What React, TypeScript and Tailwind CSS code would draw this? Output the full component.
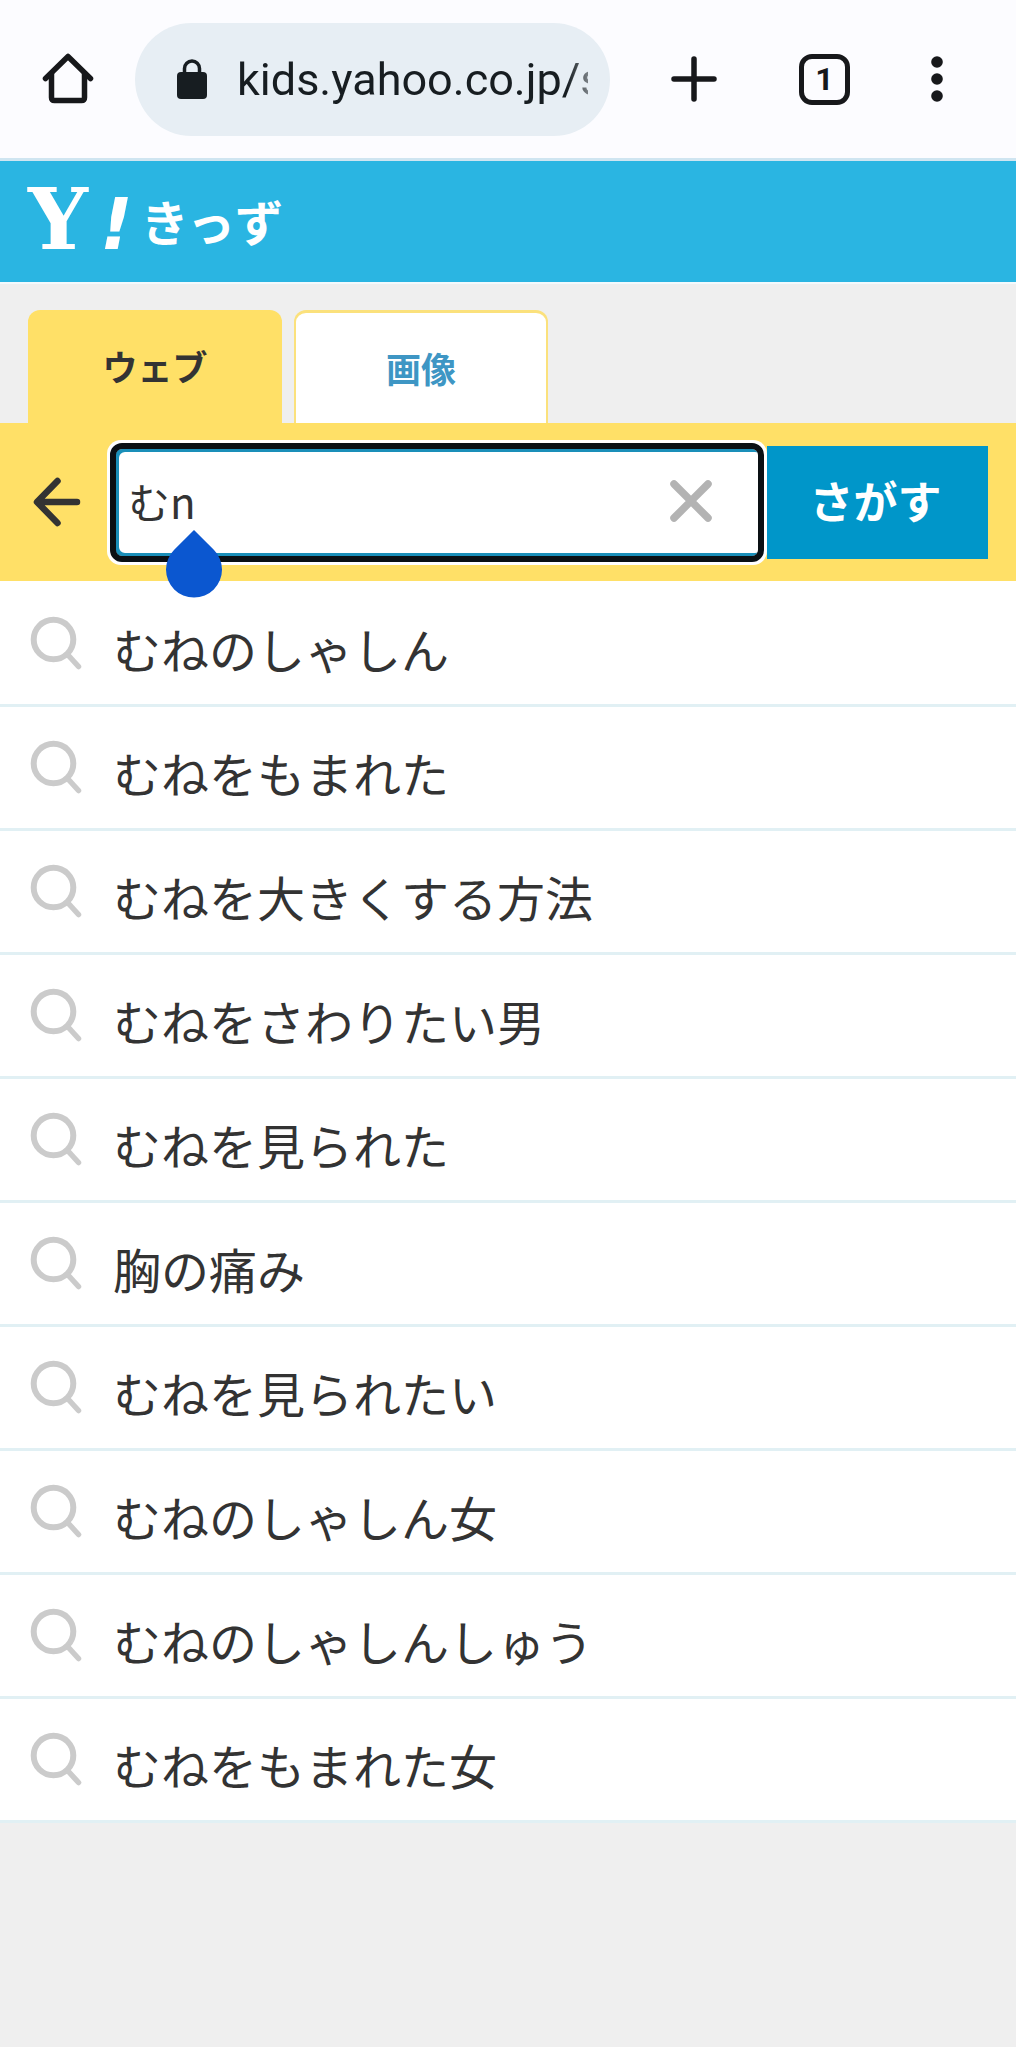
import React, { useState } from "react";

const suggestions = [
  "むねのしゃしん",
  "むねをもまれた",
  "むねを大きくする方法",
  "むねをさわりたい男",
  "むねを見られた",
  "胸の痛み",
  "むねを見られたい",
  "むねのしゃしん女",
  "むねのしゃしんしゅう",
  "むねをもまれた女",
];

function HomeIcon() {
  return (
    <svg className="h-[60px] w-[60px]" viewBox="0 0 60 60" fill="none" stroke="#17181b" strokeWidth="5.500" strokeLinecap="round" strokeLinejoin="round" aria-hidden="true">
      <path d="M7.500 29.500 L30 7.500 L52.500 29.500" />
      <path d="M13.500 25 V48.500 Q13.500 51.500 16.500 51.500 H43.500 Q46.500 51.500 46.500 48.500 V25" />
    </svg>
  );
}

function LockIcon() {
  return (
    <svg className="h-10 w-[30px] shrink-0" viewBox="0 0 30 40" aria-hidden="true">
      <rect x="0" y="13" width="30" height="27" rx="4" fill="#171d21" />
      <path d="M7.500 15 V9.500 a7.500 7.500 0 0 1 15 0 V15" fill="none" stroke="#171d21" strokeWidth="3.500" />
    </svg>
  );
}

function BrowserBar() {
  return (
    <div className="flex h-[161px] items-center border-b-[3px] border-[#cfe5f1] bg-[#fcfcff] pl-[38px] pr-[64px]">
      <button type="button" aria-label="ホーム">
        <HomeIcon />
      </button>
      <label className="ml-[37px] flex h-[113px] min-w-0 flex-1 items-center rounded-full bg-[#e7eef4] pl-[42px] pr-[22px]">
        <LockIcon />
        <input
          type="text"
          readOnly
          aria-label="アドレス"
          value="kids.yahoo.co.jp/search"
          className="ml-[30px] h-[60px] w-full min-w-0 bg-transparent pt-0.5 text-[45px] text-[#171d21] outline-none [font-family:Roboto,sans-serif] [mask-image:linear-gradient(to_right,black_94%,#0008)]"
        />
      </label>
      <button type="button" aria-label="新しいタブ" className="ml-[59px]">
        <svg className="h-[50px] w-[50px]" viewBox="0 0 50 50" stroke="#17181b" strokeWidth="5.500" strokeLinecap="round" aria-hidden="true">
          <path d="M25 5 V45 M5 25 H45" />
        </svg>
      </button>
      <button type="button" aria-label="タブ一覧" className="ml-20 flex size-[51px] items-center justify-center rounded-[13px] border-[5px] border-[#17181b] text-[32px] font-bold leading-none text-[#17181b] [font-family:Roboto,sans-serif]">
        1
      </button>
      <button type="button" aria-label="メニュー" className="ml-[72px]">
        <svg className="h-[50px] w-[30px]" viewBox="0 0 30 50" fill="#17181b" aria-hidden="true">
          <circle cx="15" cy="8" r="5.800" />
          <circle cx="15" cy="25" r="5.800" />
          <circle cx="15" cy="42" r="5.800" />
        </svg>
      </button>
    </div>
  );
}

function SiteHeader() {
  return (
    <header className="flex h-[123px] items-center border-b-2 border-[#f3fafd] bg-[#2ab5e2] pl-7">
      <a href="#top" aria-label="Yahoo!きっず" className="flex items-center leading-none text-white">
        <span className="flex items-baseline pb-1">
          <span className="text-[84px] font-bold [font-family:'DejaVu_Serif','Liberation_Serif',serif]">Y</span>
          <span className="ml-3 text-[72px] font-bold italic [font-family:'DejaVu_Sans','Liberation_Sans',sans-serif]">!</span>
        </span>
        <span className="ml-2 pb-1 text-[48px] font-bold [font-family:'Noto_Sans_CJK_JP',sans-serif]">きっず</span>
      </a>
    </header>
  );
}

function Tabs() {
  return (
    <nav className="flex gap-3 px-7 pt-[26px]">
      <a href="#web" aria-current="page" className="flex h-[113px] w-[254px] items-center justify-center rounded-t-[12px] bg-[#ffe067] text-[35px] font-bold text-[#333]">
        ウェブ
      </a>
      <a href="#image" className="flex h-[113px] w-[254px] items-center justify-center rounded-t-[12px] border-x-2 border-t-[3px] border-[#fbe17c] bg-white text-[35px] font-bold text-[#3e96c4]">
        画像
      </a>
    </nav>
  );
}

function SearchBar() {
  const [query, setQuery] = useState("むn");
  return (
    <form className="flex h-[158px] items-center bg-[#ffe067] pl-[30px] pr-7" onSubmit={(e) => e.preventDefault()}>
      <button type="button" aria-label="戻る">
        <svg className="h-[54px] w-[54px]" viewBox="0 0 54 54" fill="none" stroke="#333" strokeWidth="6.500" strokeLinecap="round" strokeLinejoin="round" aria-hidden="true">
          <path d="M27.500 6 L7 27 L27.500 48 M8 27 H47" />
        </svg>
      </button>
      <div className="relative ml-[23px] flex h-[125px] min-w-0 flex-1 rounded-[14px] bg-white p-[3px]">
        <input
          type="text"
          aria-label="けんさく"
          value={query}
          onChange={(e) => setQuery(e.target.value)}
          className="h-full w-full min-w-0 rounded-[12px] border-[6px] border-[#0a1014] bg-white pb-1 pl-3 pr-24 text-[42px] text-[#333] shadow-[inset_3px_3px_0_#1a8fb9,inset_3px_-3px_0_#1a8fb9] outline-none"
        />
        <button type="button" aria-label="消す" onClick={() => setQuery("")} className="absolute right-12 top-[33px]">
          <svg className="h-[56px] w-[56px]" viewBox="0 0 56 56" stroke="#b3b3b3" strokeWidth="7.500" strokeLinecap="round" aria-hidden="true">
            <path d="M11 11 L45 45 M45 11 L11 45" />
          </svg>
        </button>
        <svg className="absolute left-[59px] top-[90px] z-10 h-[68px] w-[56px]" viewBox="0 0 56 68" fill="#0b57d0" aria-hidden="true">
          <path d="M28 0 L47.800 19.800 A28 28 0 1 1 8.200 19.800 Z" />
        </svg>
      </div>
      <button type="submit" className="h-[113px] w-[221px] bg-[#0096c9] pb-1 pr-1 text-[44px] font-bold text-white">
        さがす
      </button>
    </form>
  );
}

function Suggestion({ text }: { text: string }) {
  return (
    <li className="h-[124px] border-b-[3px] border-[#e1f0f4]">
      <a href="#result" className="flex h-full items-start pl-[29px] text-[48px] leading-[70px] text-[#333]">
        <svg className="mt-8 h-[56px] w-[56px] shrink-0" viewBox="0 0 56 56" fill="none" stroke="#cbcbcb" strokeLinecap="round" aria-hidden="true">
          <circle cx="24.500" cy="24.500" r="19.800" strokeWidth="6" />
          <path d="M39 40 L49.500 51.500" strokeWidth="5.500" />
        </svg>
        <span className="ml-7 mt-[30px] whitespace-nowrap">{text}</span>
      </a>
    </li>
  );
}

export default function App() {
  return (
    <div className="min-h-screen bg-[#efefef] [font-family:'Noto_Sans_CJK_JP',sans-serif]">
      <BrowserBar />
      <SiteHeader />
      <main>
        <Tabs />
        <SearchBar />
        <ul className="bg-white pt-0.5">
          {suggestions.map((text) => (
            <Suggestion key={text} text={text} />
          ))}
        </ul>
      </main>
    </div>
  );
}
